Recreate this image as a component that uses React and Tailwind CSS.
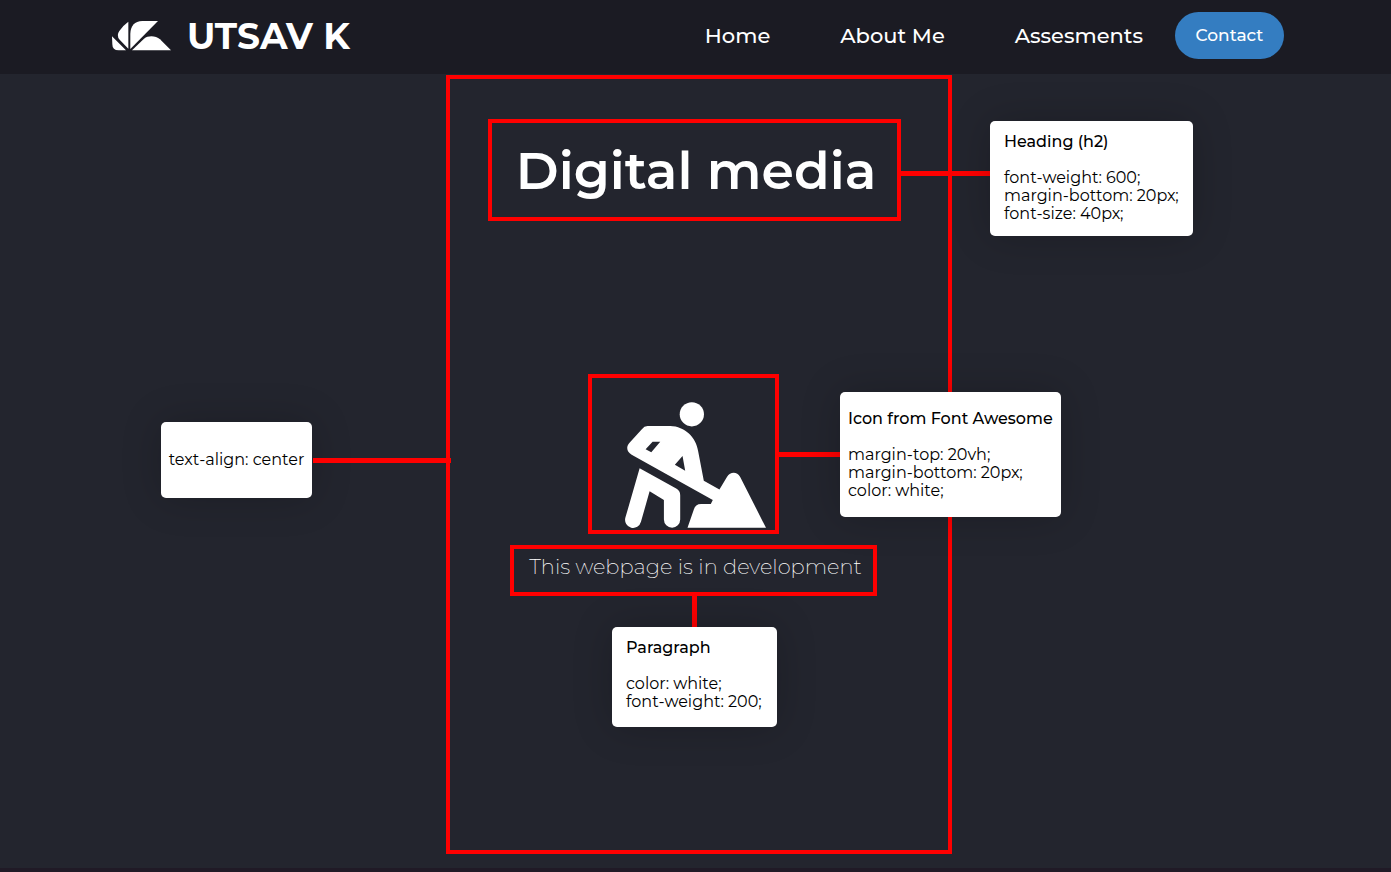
import React from "react";

function LogoMark() {
  return (
    <svg viewBox="0 0 177 90" className="h-[30px] w-[59px] shrink-0" fill="#fff" aria-hidden="true">
      <path d="M0 46 L42 88 H20 Q1 88 1 70 Z" />
      <path d="M49 2 V83 L23 56 Q12 44 22 30 Q31 15 49 2 Z" />
      <path d="M55 84 V39 C55 16 68 0 91 0 H138 Z" />
      <path d="M60 88 L96 53 C109 43 131 44 144 55 L177 88 Z" />
    </svg>
  );
}

function DiggingIcon() {
  return (
    <svg viewBox="0 0 424 378" className="h-[126px] w-[141px]" fill="#fff" aria-hidden="true">
      <circle cx="201" cy="36.500" r="36.500" />
      <path
        fillRule="evenodd"
        d="M68 72 H136 C180 73 214 106 220 148 L237 236 L284 263 L307 224 C316 209 337 208 346 224 L424 378 H188 L207 323 Q211 306 229 306 H258 L264 294 L20 158 C6 150 2 135 13 123 L50 82 Q58 72 68 72 Z M83 119 L62 142 L79 151 L106 119 Z M173 162 L150 188 L181 206 Z"
      />
      <path d="M44 199 L154 260 Q166 267 166 280 V353 A24 24 0 0 1 117 353 V294 L74 268 L48 360 A24 24 0 0 1 1 348 Z" />
    </svg>
  );
}

function Card({ title, lines, className }) {
  return (
    <div className={`rounded-[5px] bg-white text-base leading-[18px] whitespace-nowrap text-black shadow-[0_0_40px_rgba(0,0,0,0.2)] ${className}`}>
      {title && <h3 className="mb-[18px] font-medium">{title}</h3>}
      {lines.map((line) => (
        <p key={line}>{line}</p>
      ))}
    </div>
  );
}

export default function App() {
  return (
    <div className="flex min-h-screen flex-col overflow-x-hidden bg-[#23252e] font-['Montserrat','Inter',sans-serif] text-white">
      <header className="flex h-[74px] items-center justify-between bg-[#1b1b23] pr-[107px] pb-[3px] pl-28">
        <a href="#home" className="flex items-center gap-4">
          <LogoMark />
          <span className="text-4xl leading-none font-bold">UTSAV K</span>
        </a>
        <nav className="flex items-center gap-8">
          <div className="flex gap-[70px] text-[21px] font-medium">
            <a href="#home">Home</a>
            <a href="#about">About Me</a>
            <a href="#assesments">Assesments</a>
          </div>
          <button type="button" className="h-[47px] w-[109px] rounded-full bg-[#347dc1] text-[17px] font-medium">
            Contact
          </button>
        </nav>
      </header>

      <main className="flex grow justify-center pt-px pb-[14px] pl-[7px]">
        <section className="relative flex w-[506px] flex-col items-center border-4 border-[#f00] pt-10 pr-[9px]">
          <div className="relative flex h-[102px] w-[413px] items-center justify-center border-4 border-[#f00] pt-0.5 pl-[3px]">
            <h2 className="text-[52px] leading-none font-semibold whitespace-nowrap">Digital media</h2>
            <div className="absolute top-[-2px] left-full ml-1 flex items-start">
              <div className="mt-[50px] h-[5px] w-[89px] bg-[#f00]" />
              <Card
                title="Heading (h2)"
                lines={["font-weight: 600;", "margin-bottom: 20px;", "font-size: 40px;"]}
                className="w-[203px] px-[14px] pt-3 pb-[13px]"
              />
            </div>
          </div>

          <div className="relative mt-[153px] mr-[22px] flex h-[160px] w-[191px] items-end justify-center border-4 border-[#f00] pb-[2px] pl-6">
            <DiggingIcon />
            <div className="absolute top-[14px] left-full z-10 ml-1 flex items-center">
              <div className="h-[5px] w-[61px] bg-[#f00]" />
              <Card
                title="Icon from Font Awesome"
                lines={["margin-top: 20vh;", "margin-bottom: 20px;", "color: white;"]}
                className="w-[221px] px-2 pt-[18px] pb-[17px]"
              />
            </div>
          </div>

          <div className="mt-[11px] mr-0.5 flex h-[51px] w-[367px] justify-center border-4 border-[#f00] pt-0.5 pl-1">
            <p className="text-[21px] leading-8 font-extralight whitespace-nowrap">This webpage is in development</p>
          </div>
          <div className="h-[31px] w-[5px] bg-[#f00]" />
          <Card
            title="Paragraph"
            lines={["color: white;", "font-weight: 200;"]}
            className="w-[165px] px-[14px] pt-3 pb-4"
          />

          <div className="absolute top-[343px] right-full mr-1 flex items-center gap-px">
            <Card lines={["text-align: center"]} className="w-[151px] py-[29px] text-center" />
            <div className="-mr-[5px] h-[5px] w-[138px] bg-[#f00]" />
          </div>
        </section>
      </main>
      <div className="h-1 bg-[#201a26]" />
    </div>
  );
}
